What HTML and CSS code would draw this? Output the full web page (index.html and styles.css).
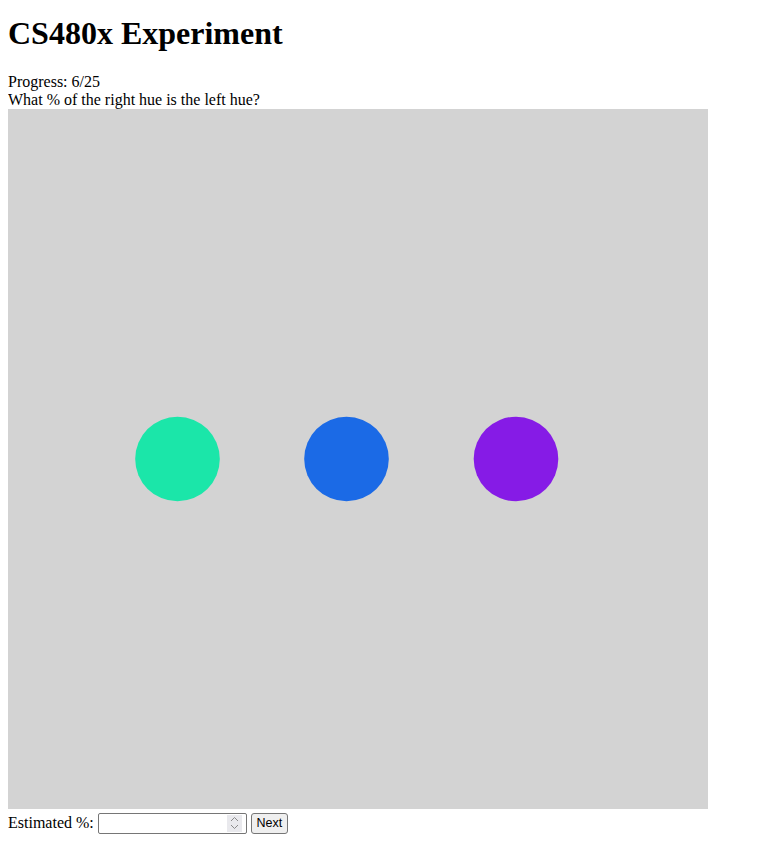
FILE: index.html
```html
<!DOCTYPE html>
<html>
<head>
<meta charset="utf-8">
<link rel="stylesheet" href="styles.css">
</head>
<body>
<h1 class="title">CS480x Experiment</h1>
<div class="progress">Progress: 6/25</div>
<div class="question">What % of the right hue is the left hue?</div>
<svg class="chart" width="700" height="700" viewBox="0 0 700 700">
  <rect width="700" height="700" fill="#d3d3d3"/>
  <circle cx="169.5" cy="350" r="42.3" fill="#1be6a9"/>
  <circle cx="338.5" cy="350" r="42.3" fill="#1b6ae6"/>
  <circle cx="508" cy="350" r="42.3" fill="#861be6"/>
</svg>
<div class="answer">
  <label for="est">Estimated %:</label>
  <span class="input-wrap"><input id="est" class="est-input" type="text"><span class="spinner" aria-hidden="true"><svg width="9" height="14" viewBox="0 0 9 14"><path d="M1 5 L4.5 1.5 L8 5" fill="none" stroke="#8a8a8a" stroke-width="1"/><path d="M1 9 L4.5 12.5 L8 9" fill="none" stroke="#8a8a8a" stroke-width="1"/></svg></span></span>
  <button class="next-btn">Next</button>
</div>
</body>
</html>
```
FILE: styles.css
```css
body {
  margin: 8px;
  font-family: "Liberation Serif", "Times New Roman", serif;
  font-size: 16px;
  background: #fff;
  color: #000;
}
.title {
  font-size: 32px;
  margin: 6.5px 0 21.44px;
  font-weight: bold;
}
.chart {
  display: block;
}
.answer {
  font-size: 16px;
  line-height: 28px;
}
.input-wrap {
  position: relative;
  display: inline-block;
  vertical-align: middle;
  height: 21px;
  margin-top: -2px;
}
.est-input {
  box-sizing: border-box;
  width: 149px;
  height: 21px;
  margin: 0;
  padding: 1px 2px;
  border: 1px solid #767676;
  border-radius: 2px;
  font-family: "Liberation Sans", Arial, sans-serif;
  font-size: 13.33px;
  vertical-align: top;
}
.spinner {
  position: absolute;
  right: 5px;
  top: 2px;
  width: 15px;
  height: 17px;
  background: #e9e9ed;
  display: flex;
  align-items: center;
  justify-content: center;
}
.next-btn {
  box-sizing: border-box;
  width: 37px;
  height: 21px;
  margin: -2px 0 0 0;
  padding: 0;
  border: 1px solid #767676;
  border-radius: 3px;
  background: #efefef;
  font-family: "Liberation Sans", Arial, sans-serif;
  font-size: 12.5px;
  color: #000;
  vertical-align: middle;
}
```
